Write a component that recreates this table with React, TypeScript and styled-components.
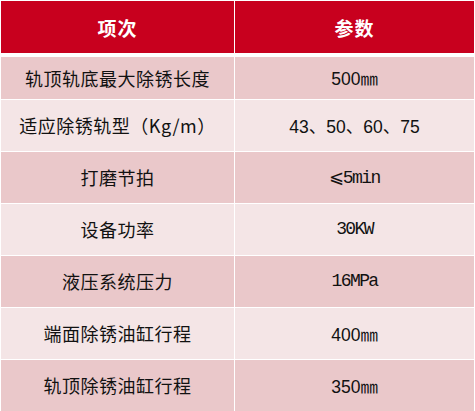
import React from 'react'
import styled, { createGlobalStyle } from 'styled-components'

type Row = {
    name: string
    value: string
    mono?: boolean
}

const rows: Row[] = [
    { name: '轨顶轨底最大除锈长度', value: '500㎜' },
    { name: '适应除锈轨型（Kg/m）', value: '43、50、60、75' },
    { name: '打磨节拍', value: '⩽5min', mono: true },
    { name: '设备功率', value: '30KW', mono: true },
    { name: '液压系统压力', value: '16MPa', mono: true },
    { name: '端面除锈油缸行程', value: '400㎜' },
    { name: '轨顶除锈油缸行程', value: '350㎜' }
]

const GlobalStyle = createGlobalStyle`
    html, body {
        margin: 0;
        padding: 0;
        background: #ffffff;
    }
`

const App: React.FC = () => {
    return (
        <>
            <GlobalStyle />
            <Table>
                <HeadCell>项次</HeadCell>
                <HeadCell>参数</HeadCell>
                {rows.map((row, i) => (
                    <React.Fragment key={row.name}>
                        <Cell $dark={i % 2 === 0} $first={i === 0}>
                            {row.name}
                        </Cell>
                        <ValueCell $dark={i % 2 === 0} $first={i === 0} $mono={row.mono}>
                            {row.value}
                        </ValueCell>
                    </React.Fragment>
                ))}
            </Table>
        </>
    )
}

const Table = styled.div`
    display: grid;
    grid-template-columns: 233px 1fr;
    column-gap: 1.4px;
    row-gap: 1.5px;
    padding: 1px 1.3px 0 1px;
    width: 475px;
    box-sizing: border-box;
`

const HeadCell = styled.div`
    height: 52px;
    margin-bottom: 2.2px;
    background: #c8001e;
    color: #ffffff;
    font-family: "Noto Sans CJK SC", "Noto Sans", sans-serif;
    font-weight: 700;
    font-size: 19px;
    letter-spacing: 1px;
    display: flex;
    align-items: center;
    justify-content: center;
`

const Cell = styled.div<{ $dark: boolean; $first: boolean }>`
    height: ${p => (p.$first ? '42px' : '50.5px')};
    background: ${p => (p.$dark ? '#eac8ca' : '#f4e5e6')};
    color: #111111;
    font-family: "Noto Sans CJK SC", "Noto Sans", sans-serif;
    font-size: 18px;
    letter-spacing: 0.5px;
    display: flex;
    align-items: center;
    justify-content: center;
`

const ValueCell = styled(Cell)<{ $mono?: boolean }>`
    font-family: ${p => (p.$mono
        ? '"Liberation Mono", "DejaVu Sans Mono", "Noto Sans CJK SC", monospace'
        : '"Liberation Sans", "Noto Sans CJK SC", sans-serif')};
    font-size: ${p => (p.$mono ? '18px' : '17.5px')};
    letter-spacing: ${p => (p.$mono ? '-1.6px' : '0')};
    white-space: pre;
`

export default App
